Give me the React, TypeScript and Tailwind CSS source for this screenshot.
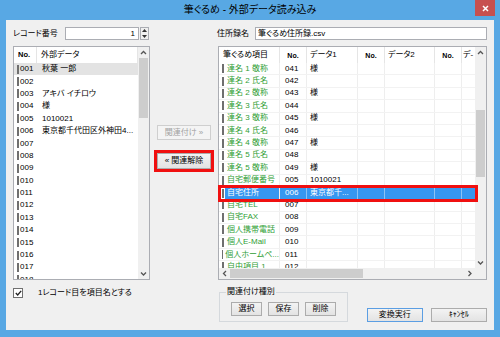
import React from "react";

const leftRows: [string, string][] = [
  ["001", "秋葉 一郎"],
  ["002", ""],
  ["003", "アキバ イチロウ"],
  ["004", "様"],
  ["005", "1010021"],
  ["006", "東京都千代田区外神田4..."],
  ["007", ""],
  ["008", ""],
  ["009", ""],
  ["010", ""],
  ["011", ""],
  ["012", ""],
  ["013", ""],
  ["014", ""],
  ["015", ""],
  ["016", ""],
  ["017", ""],
  ["018", ""],
];

const rightRows: [string, string, string][] = [
  ["連名 1 敬称", "041", "様"],
  ["連名 2 氏名", "042", ""],
  ["連名 2 敬称", "043", "様"],
  ["連名 3 氏名", "044", ""],
  ["連名 3 敬称", "045", "様"],
  ["連名 4 氏名", "046", ""],
  ["連名 4 敬称", "047", "様"],
  ["連名 5 氏名", "048", ""],
  ["連名 5 敬称", "049", "様"],
  ["自宅郵便番号", "005", "1010021"],
  ["自宅住所", "006", "東京都千..."],
  ["自宅TEL", "007", ""],
  ["自宅FAX", "008", ""],
  ["個人携帯電話", "009", ""],
  ["個人E-Mail", "010", ""],
  ["個人ホームペ...", "011", ""],
  ["自由項目 1", "012", ""],
];

// 矢印（スクロールバー用）
function Chevron({ dir }: { dir: "up" | "down" | "left" | "right" }) {
  const d = {
    up: "M1 4 L3.5 1.5 L6 4",
    down: "M1 1.5 L3.5 4 L6 1.5",
    left: "M4 1 L1.5 3.5 L4 6",
    right: "M1.5 1 L4 3.5 L1.5 6",
  }[dir];
  const horiz = dir === "left" || dir === "right";
  return (
    <svg width={horiz ? 6 : 7} height={horiz ? 7 : 6} viewBox={horiz ? "0 0 6 7" : "0 0 7 6"}>
      <path d={d} fill="none" stroke="#555" strokeWidth="1.3" />
    </svg>
  );
}

function VScroll({ thumbTop, thumbH }: { thumbTop: string; thumbH: string }) {
  return (
    <div className="flex w-[11px] flex-col bg-[#f0f0f0]">
      <div className="flex h-[11px] items-center justify-center">
        <Chevron dir="up" />
      </div>
      <div className="relative flex-1">
        <div className={`absolute left-[1px] right-[1px] bg-[#cdcdcd] ${thumbTop} ${thumbH}`} />
      </div>
      <div className="flex h-[11px] items-center justify-center">
        <Chevron dir="down" />
      </div>
    </div>
  );
}

function Btn({ children, className = "", primary = false }: { children: React.ReactNode; className?: string; primary?: boolean }) {
  return (
    <div
      className={`flex items-center justify-center border bg-gradient-to-b from-[#f3f3f3] to-[#e3e3e3] text-[8px] leading-none text-black ${
        primary ? "border-[#5b9ee3]" : "border-[#acacac]"
      } ${className}`}
    >
      {children}
    </div>
  );
}

export default function App() {
  return (
    <div className="flex h-[337px] w-[500px] flex-col bg-[#58a8e4] font-['Liberation_Sans','Noto_Sans_CJK_JP',sans-serif] text-black [font-feature-settings:'palt']">
      {/* タイトルバー */}
      <div className="relative flex h-[20px] shrink-0 items-center justify-center">
        <span className="text-[10px] leading-none">筆ぐるめ - 外部データ読み込み</span>
        <div className="absolute right-[5px] top-0 flex h-[16px] w-[20px] items-center justify-center bg-[#c75050]">
          <svg width="7" height="7" viewBox="0 0 7 7">
            <path d="M1 1 L6 6 M6 1 L1 6" stroke="#fff" strokeWidth="1.5" />
          </svg>
        </div>
      </div>

      {/* クライアント領域 */}
      <div className="mx-[6px] mb-[7px] flex flex-1 bg-[#f0f0f0] px-[7px] pt-[7px]">
        {/* 左カラム */}
        <div className="flex w-[137px] shrink-0 flex-col">
          <div className="flex h-[13px] items-center">
            <span className="w-[52px] text-[8px] leading-none">レコード番号</span>
            <div className="flex h-[13px] w-[74px] items-center justify-end border border-[#abadb3] bg-white pr-[3px] text-[8px] leading-none">
              1
            </div>
            <div className="ml-[1px] flex h-[13px] w-[9px] flex-col border border-[#abadb3] bg-[#f0f0f0]">
              <div className="flex flex-1 items-center justify-center">
                <svg width="5" height="3" viewBox="0 0 5 3">
                  <path d="M0 3 L2.5 0 L5 3 Z" fill="#333" />
                </svg>
              </div>
              <div className="flex flex-1 items-center justify-center">
                <svg width="5" height="3" viewBox="0 0 5 3">
                  <path d="M0 0 L2.5 3 L5 0 Z" fill="#333" />
                </svg>
              </div>
            </div>
          </div>

          <div className="mt-[6px] flex h-[234px] border border-[#abadb3] bg-white">
            <div className="flex w-[124px] flex-col overflow-hidden">
              <div className="flex h-[16px] shrink-0 items-center text-[7.5px] leading-none">
                <div className="flex h-full w-[23px] items-center border-r border-[#e5e5e5] pl-[4px] font-bold">No.</div>
                <div className="flex h-full flex-1 items-center border-r border-[#e5e5e5] pl-[4px] text-[8px] font-normal">外部データ</div>
              </div>
              {leftRows.map(([no, data], i) => (
                <div
                  key={no}
                  className={`flex h-[12.4px] shrink-0 items-center text-[8px] leading-none ${i === 0 ? "bg-[#e3e3e3]" : ""}`}
                >
                  <div className="ml-[3px] h-[9px] w-[2px] bg-[#6f6f6f]" />
                  <span className="ml-[1px] w-[22px]">{no}</span>
                  <span className="whitespace-nowrap">{data}</span>
                </div>
              ))}
            </div>
            <VScroll thumbTop="top-0" thumbH="h-[60px]" />
          </div>

          <div className="mt-[8px] flex items-center">
            <div className="flex h-[10px] w-[10px] items-center justify-center border border-[#707070] bg-white">
              <svg width="7" height="6" viewBox="0 0 7 6">
                <path d="M0.8 3 L2.7 5 L6.2 0.8" fill="none" stroke="#222" strokeWidth="1.3" />
              </svg>
            </div>
            <span className="ml-[15px] text-[8px] leading-none">1レコード目を項目名とする</span>
          </div>
        </div>

        {/* 中央カラム */}
        <div className="flex w-[68px] shrink-0 flex-col items-center pt-[98px]">
          <div className="flex h-[15px] w-[54px] items-center justify-center border border-[#cfcfcf] bg-[#f4f4f4] text-[8px] leading-none text-[#a2a2a2]">
            関連付け »
          </div>
          <div className="mt-[10px] border-[3px] border-[#f01010]">
            <Btn className="h-[16px] w-[54px]">« 関連解除</Btn>
          </div>
        </div>

        {/* 右カラム */}
        <div className="flex w-[269px] shrink-0 flex-col">
          <div className="flex h-[13px] items-center">
            <span className="-ml-[1px] w-[38px] text-[8px] leading-none">住所録名</span>
            <div className="flex h-[13px] w-[232px] items-center border border-[#abadb3] bg-white pl-[2px] text-[8px] leading-none">
              筆ぐるめ住所録.csv
            </div>
          </div>

          <div className="relative mt-[6px] flex h-[234px] flex-col border border-[#abadb3] bg-white">
            <div className="flex min-h-0 flex-1">
              <div className="flex w-[256px] flex-col overflow-hidden">
                <div className="flex h-[16px] shrink-0 items-center text-[8px] leading-none">
                  <div className="flex h-full w-[61px] items-center border-r border-[#e5e5e5] pl-[4px]">筆ぐるめ項目</div>
                  <div className="flex h-full w-[27px] items-center justify-center border-r border-[#e5e5e5] text-[7px] font-bold">No.</div>
                  <div className="flex h-full w-[51px] items-center border-r border-[#e5e5e5] pl-[3px]">データ1</div>
                  <div className="flex h-full w-[27px] items-center justify-center border-r border-[#e5e5e5] text-[7px] font-bold">No.</div>
                  <div className="flex h-full w-[50px] items-center border-r border-[#e5e5e5] pl-[3px]">データ2</div>
                  <div className="flex h-full w-[27px] items-center justify-center border-r border-[#e5e5e5] text-[7px] font-bold">No.</div>
                  <div className="flex h-full w-[13px] items-center overflow-hidden whitespace-nowrap pl-[1px]">デ-</div>
                </div>
                {rightRows.map(([item, no, data], i) => {
                  const sel = i === 10;
                  const line = sel ? "border-[#8cc3f5]" : "border-[#eeeeee]";
                  return (
                    <div
                      key={item}
                      className={`flex h-[12.4px] shrink-0 text-[8px] leading-none ${sel ? "text-white" : "border-b border-[#f2f2f2]"}`}
                    >
                      <div className={`flex w-[61px] items-center border-r border-[#eeeeee]`}>
                        <div className="ml-[3px] h-[9px] w-[2px] bg-[#6f6f6f]" />
                        <div className={`ml-[1px] flex h-full flex-1 items-center whitespace-nowrap pl-[2px] ${sel ? "bg-[#3797f0]" : "text-[#2f9e35]"}`}>
                          {item}
                        </div>
                      </div>
                      <div className={`flex w-[27px] items-center border-r pl-[5px] ${line} ${sel ? "bg-[#3797f0]" : ""}`}>{no}</div>
                      <div className={`flex w-[51px] items-center whitespace-nowrap border-r pl-[3px] ${line} ${sel ? "bg-[#3797f0]" : ""}`}>{data}</div>
                      <div className={`w-[27px] border-r ${line} ${sel ? "bg-[#3797f0]" : ""}`} />
                      <div className={`w-[50px] border-r ${line} ${sel ? "bg-[#3797f0]" : ""}`} />
                      <div className={`w-[27px] border-r ${line} ${sel ? "bg-[#3797f0]" : ""}`} />
                      <div className={`w-[13px] ${sel ? "bg-[#3797f0]" : ""}`} />
                    </div>
                  );
                })}
              </div>
              <VScroll thumbTop="top-[52px]" thumbH="h-[67px]" />
            </div>
            <div className="flex h-[11px] shrink-0">
              <div className="flex w-[256px] bg-[#f0f0f0]">
                <div className="flex w-[11px] items-center justify-center">
                  <Chevron dir="left" />
                </div>
                <div className="my-[1px] w-[133px] bg-[#cdcdcd]" />
                <div className="flex-1" />
                <div className="flex w-[11px] items-center justify-center">
                  <Chevron dir="right" />
                </div>
              </div>
              <div className="w-[11px] bg-[#f0f0f0]" />
            </div>

            {/* 選択行の強調枠 */}
            <div className="absolute left-[-1px] top-[138px] h-[17px] w-[260px] border-[3px] border-[#f01010]" />
          </div>

          <div className="mt-[8px] flex items-end">
            <fieldset className="ml-[1px] h-[34px] w-[128px] border border-[#d5d9dd] px-[11px]">
              <legend className="ml-[-5px] px-[1px] text-[8px] leading-none">関連付け種別</legend>
              <div className="mt-[6px] flex gap-[6px]">
                <Btn className="h-[14px] w-[31px]">選択</Btn>
                <Btn className="h-[14px] w-[31px]">保存</Btn>
                <Btn className="h-[14px] w-[31px]">削除</Btn>
              </div>
            </fieldset>
            <Btn primary className="ml-[19px] h-[14px] w-[56px]">変換実行</Btn>
            <Btn className="ml-[8px] h-[14px] w-[57px] text-[7px]">ｷｬﾝｾﾙ</Btn>
          </div>
        </div>
      </div>
    </div>
  );
}
